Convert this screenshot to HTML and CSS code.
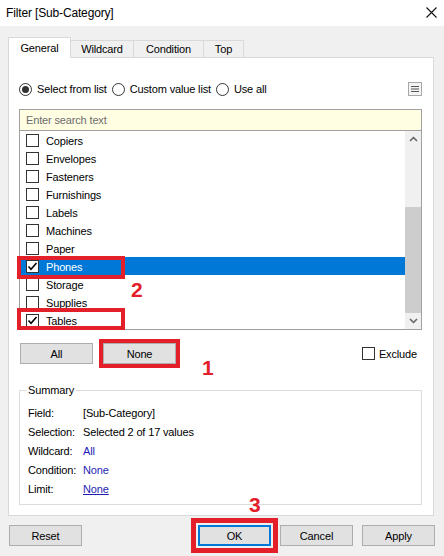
FILE: index.html
```html
<!DOCTYPE html>
<html lang="en">
<head>
    <meta charset="UTF-8">
    <meta name="viewport" content="width=device-width, initial-scale=1.0">
    <title>Filter [Sub-Category]</title>
    <link rel="stylesheet" href="styles.css">
</head>
<body>
    <div class="titlebar">
        <span>Filter [Sub-Category]</span>
        <svg class="close" width="11" height="11" viewBox="0 0 11 11">
            <path d="M0.5 0.5L10.5 10.5M10.5 0.5L0.5 10.5" stroke="#111" stroke-width="1.1" fill="none"/>
        </svg>
    </div>

    <div class="tabs">
        <div class="tab active tab-general">General</div>
        <div class="tab tab-wildcard">Wildcard</div>
        <div class="tab tab-condition">Condition</div>
        <div class="tab tab-top">Top</div>
    </div>

    <div class="panel">
        <div class="mode-row">
            <label class="radio"><span class="dot on"></span>Select from list</label>
            <label class="radio"><span class="dot"></span>Custom value list</label>
            <label class="radio"><span class="dot"></span>Use all</label>
            <span class="menu-btn">
                <svg width="8" height="8" viewBox="0 0 8 8">
                    <path d="M0 1.5H8M0 4H8M0 6.5H8" stroke="#555" stroke-width="1.2"/>
                </svg>
            </span>
        </div>

        <div class="picker">
            <div class="search">Enter search text</div>
            <div class="list">
                <div class="items">
                    <div class="item"><span class="check"></span>Copiers</div>
                    <div class="item"><span class="check"></span>Envelopes</div>
                    <div class="item"><span class="check"></span>Fasteners</div>
                    <div class="item"><span class="check"></span>Furnishings</div>
                    <div class="item"><span class="check"></span>Labels</div>
                    <div class="item"><span class="check"></span>Machines</div>
                    <div class="item"><span class="check"></span>Paper</div>
                    <div class="item selected"><span class="check"><svg width="11" height="11" viewBox="0 0 11 11"><path d="M1.5 5.5L4 8.2L9.5 2" stroke="#000" stroke-width="1.6" fill="none"/></svg></span>Phones</div>
                    <div class="item"><span class="check"></span>Storage</div>
                    <div class="item"><span class="check"></span>Supplies</div>
                    <div class="item"><span class="check"><svg width="11" height="11" viewBox="0 0 11 11"><path d="M1.5 5.5L4 8.2L9.5 2" stroke="#000" stroke-width="1.6" fill="none"/></svg></span>Tables</div>

                    <div class="mark mark-phones"></div>
                    <div class="mark mark-tables"></div>
                    <span class="step step-2">2</span>
                </div>
                <div class="scrollbar">
                    <span class="arrow">
                        <svg width="9" height="6" viewBox="0 0 9 6"><path d="M1 5L4.5 1.5L8 5" stroke="#606060" stroke-width="1.5" fill="none"/></svg>
                    </span>
                    <div class="track"><div class="thumb"></div></div>
                    <span class="arrow">
                        <svg width="9" height="6" viewBox="0 0 9 6"><path d="M1 1L4.5 4.5L8 1" stroke="#606060" stroke-width="1.5" fill="none"/></svg>
                    </span>
                </div>
            </div>
        </div>

        <div class="select-row">
            <button class="btn">All</button>
            <button class="btn marked">None</button>
            <span class="step step-1">1</span>
            <label class="exclude"><span class="check"></span>Exclude</label>
        </div>

        <fieldset class="summary">
            <legend>Summary</legend>
            <div class="sum-row"><span class="sum-label">Field:</span><span>[Sub-Category]</span></div>
            <div class="sum-row"><span class="sum-label">Selection:</span><span>Selected 2 of 17 values</span></div>
            <div class="sum-row"><span class="sum-label">Wildcard:</span><span class="val">All</span></div>
            <div class="sum-row"><span class="sum-label">Condition:</span><span class="val">None</span></div>
            <div class="sum-row"><span class="sum-label">Limit:</span><span class="val link">None</span></div>
        </fieldset>
    </div>

    <div class="footer">
        <button class="btn">Reset</button>
        <div class="footer-right">
            <span class="step step-3">3</span>
            <button class="btn default marked-ok">OK</button>
            <button class="btn">Cancel</button>
            <button class="btn">Apply</button>
        </div>
    </div>
</body>
</html>
```

FILE: styles.css
```css
body {
    margin: 0;
    width: 444px;
    height: 556px;
    overflow: hidden;
    background-color: #f0f0f0;
    font-family: 'Liberation Sans', Arial, sans-serif;
    font-size: 11px;
    letter-spacing: -0.15px;
    color: #000;
}

.titlebar {
    height: 26px;
    background-color: #ffffff;
    display: flex;
    align-items: center;
    justify-content: space-between;
    padding: 0 7px 0 6px;
    font-size: 12px;
}

.close {
    margin-top: -2px;
}

/* tabs */
.tabs {
    height: 31px;
    display: flex;
    align-items: flex-end;
    padding-left: 8px;
}

.tab {
    height: 17px;
    box-sizing: border-box;
    border: 1px solid #d9d9d9;
    border-bottom: none;
    background-color: #f0f0f0;
    margin-left: -1px;
    display: flex;
    align-items: center;
    justify-content: center;
}

.tab.active {
    height: 21px;
    margin-left: 0;
    margin-bottom: -1px;
    background-color: #ffffff;
    position: relative;
    z-index: 1;
}

.tab-general { width: 63px; }
.tab-wildcard { width: 64px; }
.tab-condition { width: 71px; }
.tab-top { width: 41px; }

.panel {
    margin: 0 10px 0 8px;
    height: 459px;
    box-sizing: border-box;
    background-color: #ffffff;
    border: 1px solid #d9d9d9;
    padding: 21px 11px 0 10px;
}

/* select mode */
.mode-row {
    height: 20px;
    display: flex;
    align-items: center;
}

.radio {
    display: inline-flex;
    align-items: center;
    gap: 5px;
    margin-right: 5px;
}

.dot {
    width: 13px;
    height: 13px;
    box-sizing: border-box;
    border: 1px solid #333;
    border-radius: 50%;
    display: flex;
    align-items: center;
    justify-content: center;
}

.dot.on::after {
    content: "";
    width: 7px;
    height: 7px;
    border-radius: 50%;
    background-color: #333;
}

.menu-btn {
    margin-left: auto;
    width: 14px;
    height: 14px;
    box-sizing: border-box;
    border: 1px solid #a8a8a8;
    background-color: #f4f4f4;
    display: flex;
    align-items: center;
    justify-content: center;
}

/* list */
.picker {
    margin-top: 10px;
    border: 1px solid #a0a0a0;
}

.search {
    height: 20px;
    line-height: 20px;
    padding-left: 6px;
    background-color: #fffde2;
    border-bottom: 1px solid #a0a0a0;
    color: #6d6d6d;
}

.list {
    display: flex;
    height: 198px;
}

.items {
    flex: 1;
    position: relative;
}

.item {
    height: 18px;
    box-sizing: border-box;
    padding: 1px 0 0 6px;
    display: flex;
    align-items: center;
    gap: 7px;
}

.item .check {
    margin-top: -1px;
}

.item.selected {
    background-color: #0078d7;
    color: #ffffff;
}

.check {
    width: 13px;
    height: 13px;
    box-sizing: border-box;
    border: 1px solid #333;
    background-color: #ffffff;
    display: flex;
    align-items: center;
    justify-content: center;
}

.scrollbar {
    width: 16px;
    background-color: #f0f0f0;
    display: flex;
    flex-direction: column;
}

.arrow {
    height: 17px;
    display: flex;
    align-items: center;
    justify-content: center;
}

.track {
    flex: 1;
    padding-top: 59px;
}

.thumb {
    height: 106px;
    background-color: #cdcdcd;
}

/* red annotations */
.mark {
    position: absolute;
    left: -3px;
    width: 108px;
    box-sizing: border-box;
    border: 4px solid #e3202a;
}

.mark-phones {
    top: 125px;
    height: 23px;
}

.mark-tables {
    top: 177px;
    height: 22px;
}

.step {
    position: absolute;
    font-family: 'Liberation Sans', sans-serif;
    font-weight: bold;
    font-size: 21px;
    line-height: 21px;
    letter-spacing: 0;
    color: #e3202a;
}

.step-2 {
    left: 111px;
    top: 148px;
}

.step-1 {
    left: 183px;
    top: 14px;
}

.step-3 {
    left: 51px;
    top: -31px;
}

/* buttons */
.btn {
    width: 73px;
    height: 21px;
    padding: 0;
    background-color: #e1e1e1;
    border: 1px solid #adadad;
    font-family: inherit;
    font-size: 11px;
    letter-spacing: inherit;
    color: #000;
}

.select-row {
    position: relative;
    margin-top: 13px;
    display: flex;
    align-items: center;
    gap: 10px;
    padding: 0 5px 0 1px;
}

.marked {
    outline: 4px solid #e3202a;
    outline-offset: 0;
}

.exclude {
    margin-left: auto;
    display: inline-flex;
    align-items: center;
    gap: 4px;
}

/* summary */
.summary {
    margin: 20px 0 0;
    padding: 7px 8px 6px;
    border: 1px solid #dcdcdc;
    height: 121px;
    box-sizing: border-box;
}

.summary legend {
    padding: 0 2px;
    margin-left: -2px;
}

.sum-row {
    height: 19px;
    display: flex;
    align-items: center;
}

.sum-label {
    width: 55px;
}

.val {
    color: #1e1eb4;
}

.link {
    text-decoration: underline;
}

/* footer */
.footer {
    margin-top: 9px;
    padding: 0 9px;
    display: flex;
    justify-content: space-between;
}

.footer-right {
    position: relative;
    display: flex;
    gap: 9px;
}

.btn.default {
    border: 2px solid #0078d7;
}

.marked-ok {
    outline: 5px solid #e3202a;
    outline-offset: 2px;
}
```
